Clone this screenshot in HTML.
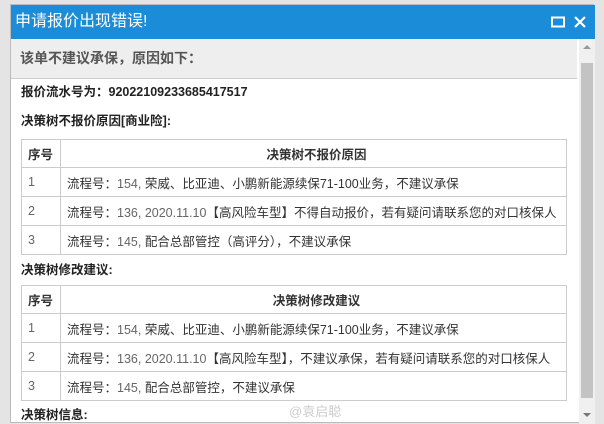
<!DOCTYPE html>
<html><head><meta charset="utf-8"><style>
*{margin:0;padding:0;box-sizing:border-box}
body{width:604px;height:423px;overflow:hidden;background:#e4e4e4;font-family:"Liberation Sans","Noto Sans CJK SC",sans-serif;position:relative}
.dlg{position:absolute;left:10px;top:4px;width:584px;height:419px;background:#fff;border:1px solid #bbb}
.title{position:absolute;left:0;top:0;width:584px;height:34px;background:#1a8cd8;color:#fff;font-size:16px;line-height:34px;padding-left:4px}
.hd{position:absolute;left:0;top:34px;width:566px;height:40px;background:#eeeeee;border-bottom:1px solid #ccc;font-size:14px;font-weight:bold;color:#555;line-height:38px;padding-left:9px}
.sb{position:absolute;left:568px;top:34px;width:16px;height:385px;background:#f0f0f0}
.thumb{position:absolute;left:2px;top:24px;width:12px;height:335px;background:#c3c3c3}
.c{position:absolute;left:10px;font-size:12.5px;font-weight:bold;color:#222}
table{position:absolute;left:10px;width:546px;border-collapse:collapse;font-size:12.5px;color:#333}
td,th{border:1px solid #ccc;height:29px;padding-left:6px;text-align:left;font-weight:normal}
th{font-weight:bold;text-align:center;height:28px}
th:first-child{text-align:left;width:39px}
.n{color:#666}
</style></head><body>
<div class="dlg">
<div class="title">申请报价出现错误!
<svg style="position:absolute;left:540px;top:11px" width="14" height="12"><rect x="1" y="1.5" width="12" height="9" fill="none" stroke="#fff" stroke-width="2"/></svg>
<svg style="position:absolute;left:562px;top:10px" width="14" height="14"><path d="M2 2L12 12M12 2L2 12" stroke="#fff" stroke-width="2.2"/></svg>
</div>
<div class="hd">该单不建议承保，原因如下：</div>
<div class="sb"><div class="thumb"></div>
<div style="position:absolute;left:4px;top:6px;border:4px solid transparent;border-bottom-color:#999;border-top:0"></div>
<div style="position:absolute;left:4px;top:374px;border:4px solid transparent;border-top-color:#777;border-bottom:0"></div></div>
<div class="c" style="top:76px">报价流水号为：92022109233685417517</div>
<div class="c" style="top:105px">决策树不报价原因[商业险]:</div>
<table style="top:134px">
<tr><th>序号</th><th>决策树不报价原因</th></tr>
<tr><td class="n">1</td><td>流程号：<span class="n">154,</span> 荣威、比亚迪、小鹏新能源续保71-100业务，不建议承保</td></tr>
<tr><td class="n">2</td><td>流程号：<span class="n">136, 2020.11.10</span>【高风险车型】不得自动报价，若有疑问请联系您的对口核保人</td></tr>
<tr><td class="n">3</td><td>流程号：<span class="n">145,</span> 配合总部管控（高评分），不建议承保</td></tr>
</table>
<div class="c" style="top:254px">决策树修改建议:</div>
<table style="top:280px">
<tr><th>序号</th><th>决策树修改建议</th></tr>
<tr><td class="n">1</td><td>流程号：<span class="n">154,</span> 荣威、比亚迪、小鹏新能源续保71-100业务，不建议承保</td></tr>
<tr><td class="n">2</td><td>流程号：<span class="n">136, 2020.11.10</span>【高风险车型】，不建议承保，若有疑问请联系您的对口核保人</td></tr>
<tr><td class="n">3</td><td>流程号：<span class="n">145,</span> 配合总部管控，不建议承保</td></tr>
</table>
<div class="c" style="top:399px">决策树信息:</div>
<div style="position:absolute;left:278px;top:396px;font-size:13px;color:#ccc">@袁启聪</div>
</div>
</body></html>
